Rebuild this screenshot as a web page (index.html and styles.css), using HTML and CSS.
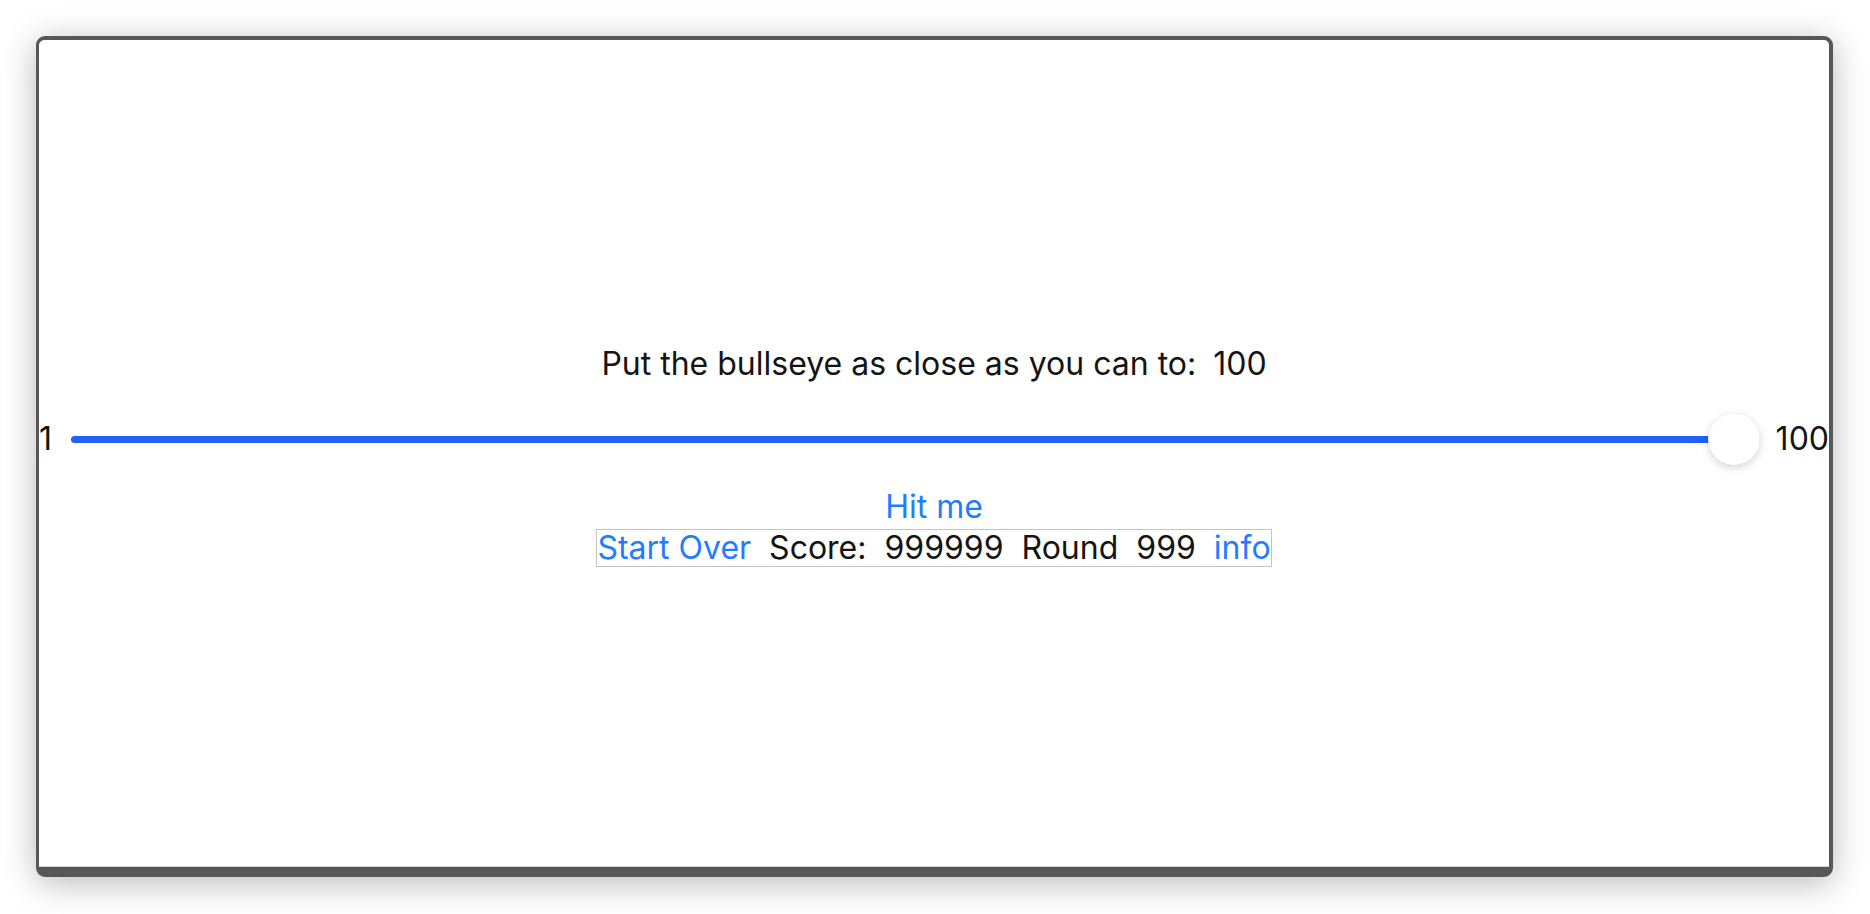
FILE: index.html
```html
<!DOCTYPE html>
<html lang="en">
<head>
<meta charset="utf-8">
<title>Bullseye</title>
<link rel="stylesheet" href="styles.css">
</head>
<body>
<div class="window">
  <div class="screen">
    <div class="target">
      <span>Put the bullseye as close as you can to:</span>
      <span>100</span>
    </div>
    <div class="slider-row">
      <span class="label min">1</span>
      <div class="slider">
        <div class="track"></div>
        <div class="thumb"></div>
      </div>
      <span class="label max">100</span>
    </div>
    <div class="hit link">Hit me</div>
    <div class="status">
      <span class="link">Start Over</span>
      <span>Score:</span>
      <span>999999</span>
      <span>Round</span>
      <span>999</span>
      <span class="link">info</span>
    </div>
  </div>
</div>
</body>
</html>
```

FILE: styles.css
```css
html, body {
  margin: 0;
  padding: 0;
  background: #ffffff;
}

body {
  width: 1870px;
  height: 914px;
  overflow: hidden;
  font-family: Inter, "Noto Sans", sans-serif;
  color: #141414;
}

.window {
  margin: 36px 0 0 36px;
  width: 1790px;
  height: 827px;
  border-style: solid;
  border-color: #575757;
  border-width: 4px 4px 10px 3px;
  border-radius: 9px;
  box-shadow: 0 6px 34px rgba(0, 0, 0, 0.28);
  background: #ffffff;
  overflow: hidden;
}

.screen {
  box-sizing: border-box;
  height: 827px;
  padding-top: 6px;
  border-bottom: 1px solid #d2d2d2;
  border-radius: 3px 3px 0 0;
  display: flex;
  flex-direction: column;
  align-items: center;
  justify-content: center;
  font-size: 32px;
  line-height: 38px;
}

.target {
  display: flex;
  gap: 17px;
}

.slider-row {
  align-self: stretch;
  display: flex;
  align-items: center;
  height: 52px;
  margin-top: 30px;
  gap: 16px;
}

.label {
  flex: none;
}

.slider {
  flex: 1;
  position: relative;
  height: 52px;
  margin-left: 3px;
  display: flex;
  align-items: center;
}

.track {
  flex: 1;
  height: 7px;
  border-radius: 3.5px;
  background: #1f63f6;
}

.thumb {
  position: absolute;
  right: 0;
  top: 0;
  width: 52px;
  height: 52px;
  border-radius: 50%;
  background: #ffffff;
  box-shadow: 0 3px 8px rgba(0, 0, 0, 0.16), 0 0 1px rgba(0, 0, 0, 0.12);
}

.link {
  color: #1f7dff;
}

.hit {
  margin-top: 23px;
}

.status {
  margin-top: 3px;
  display: flex;
  gap: 18px;
  border: 1px solid #c4c4c4;
  line-height: 36px;
}
```
